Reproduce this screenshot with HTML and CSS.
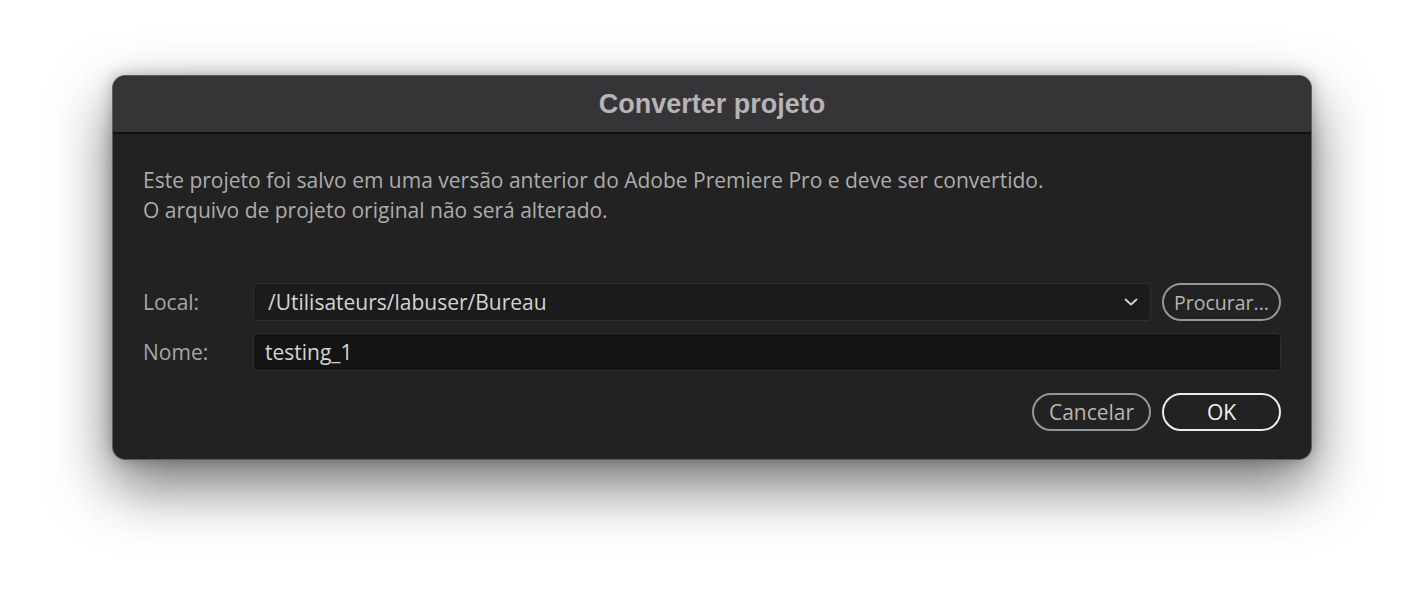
FILE: index.html
```html
<!DOCTYPE html>
<html lang="pt">
<head>
<meta charset="utf-8">
<title>Converter projeto</title>
<link rel="stylesheet" href="styles.css">
</head>
<body>
<div class="dialog">
  <div class="titlebar"><span class="title">Converter projeto</span></div>
  <div class="content">
    <p class="message">Este projeto foi salvo em uma versão anterior do Adobe Premiere Pro e deve ser convertido.<br>O arquivo de projeto original não será alterado.</p>
    <div class="fields">
      <div class="row">
        <label class="label">Local:</label>
        <div class="select">
          <span class="select-text">/Utilisateurs/labuser/Bureau</span>
          <svg class="chevron" width="14" height="8" viewBox="0 0 14 8"><path d="M1.5 1.5 L7 6.5 L12.5 1.5" fill="none" stroke="#d6d6d6" stroke-width="1.8" stroke-linecap="round" stroke-linejoin="round"/></svg>
        </div>
        <button class="btn">Procurar...</button>
      </div>
      <div class="row">
        <label class="label">Nome:</label>
        <div class="input">testing_1</div>
      </div>
    </div>
    <div class="actions">
      <button class="btn btn-cancel">Cancelar</button>
      <button class="btn btn-primary">OK</button>
    </div>
  </div>
</div>
</body>
</html>
```

FILE: styles.css
```css
html, body {
  margin: 0;
  padding: 0;
  background: #ffffff;
}
body {
  padding: 75px 0 0 112px;
  height: 608px;
  box-sizing: border-box;
  overflow: hidden;
}
.dialog {
  width: 1200px;
  height: 385px;
  box-sizing: border-box;
  border: 1px solid #5c5b5e;
  border-radius: 13px;
  background: #222222;
  overflow: hidden;
  box-shadow: 0 26px 60px rgba(0,0,0,0.55), 0 0 16px rgba(0,0,0,0.25);
  display: flex;
  flex-direction: column;
  font-family: "Open Sans", "Noto Sans", sans-serif;
}
.titlebar {
  height: 56px;
  flex: none;
  background: #363437;
  border-bottom: 2px solid #111111;
  display: flex;
  align-items: center;
  justify-content: center;
}
.title {
  font-family: "Liberation Sans", Arial, sans-serif;
  font-weight: bold;
  font-size: 27px;
  color: #b5b4b7;
}
.content {
  padding: 31px 30px 0 30px;
  display: flex;
  flex-direction: column;
}
.message {
  margin: 0;
  font-size: 21px;
  line-height: 30px;
  color: #acacac;
}
.fields {
  margin-top: 58px;
  display: flex;
  flex-direction: column;
  gap: 12px;
}
.row {
  display: flex;
  align-items: center;
  height: 38px;
}
.label {
  width: 110px;
  flex: none;
  font-size: 21px;
  color: #a6a6a6;
}
.select {
  width: 898px;
  height: 38px;
  box-sizing: border-box;
  border: 1px solid #2f2f2f;
  border-radius: 4px;
  background: #1b1b1b;
  display: flex;
  align-items: center;
  justify-content: space-between;
  padding: 0 12px 0 14px;
  margin-right: 11px;
}
.select-text, .input {
  font-size: 21px;
  color: #d4d4d4;
}
.chevron {
  display: block;
}
.input {
  flex: 1;
  height: 38px;
  box-sizing: border-box;
  border: 1px solid #2f2f2f;
  border-radius: 4px;
  background: #141414;
  display: flex;
  align-items: center;
  padding: 0 11px;
}
.btn {
  width: 119px;
  height: 38px;
  box-sizing: border-box;
  border: 2px solid #979797;
  border-radius: 19px;
  background: transparent;
  color: #b6b6b6;
  font-family: "Open Sans", "Noto Sans", sans-serif;
  font-size: 19.5px;
  padding: 0;
  display: flex;
  align-items: center;
  justify-content: center;
}
.btn-cancel {
  font-size: 21px;
}
.actions {
  margin-top: 22px;
  display: flex;
  justify-content: flex-end;
  gap: 11px;
}
.btn-primary {
  border-color: #ececec;
  color: #f2f2f2;
  font-size: 21px;
}
```
